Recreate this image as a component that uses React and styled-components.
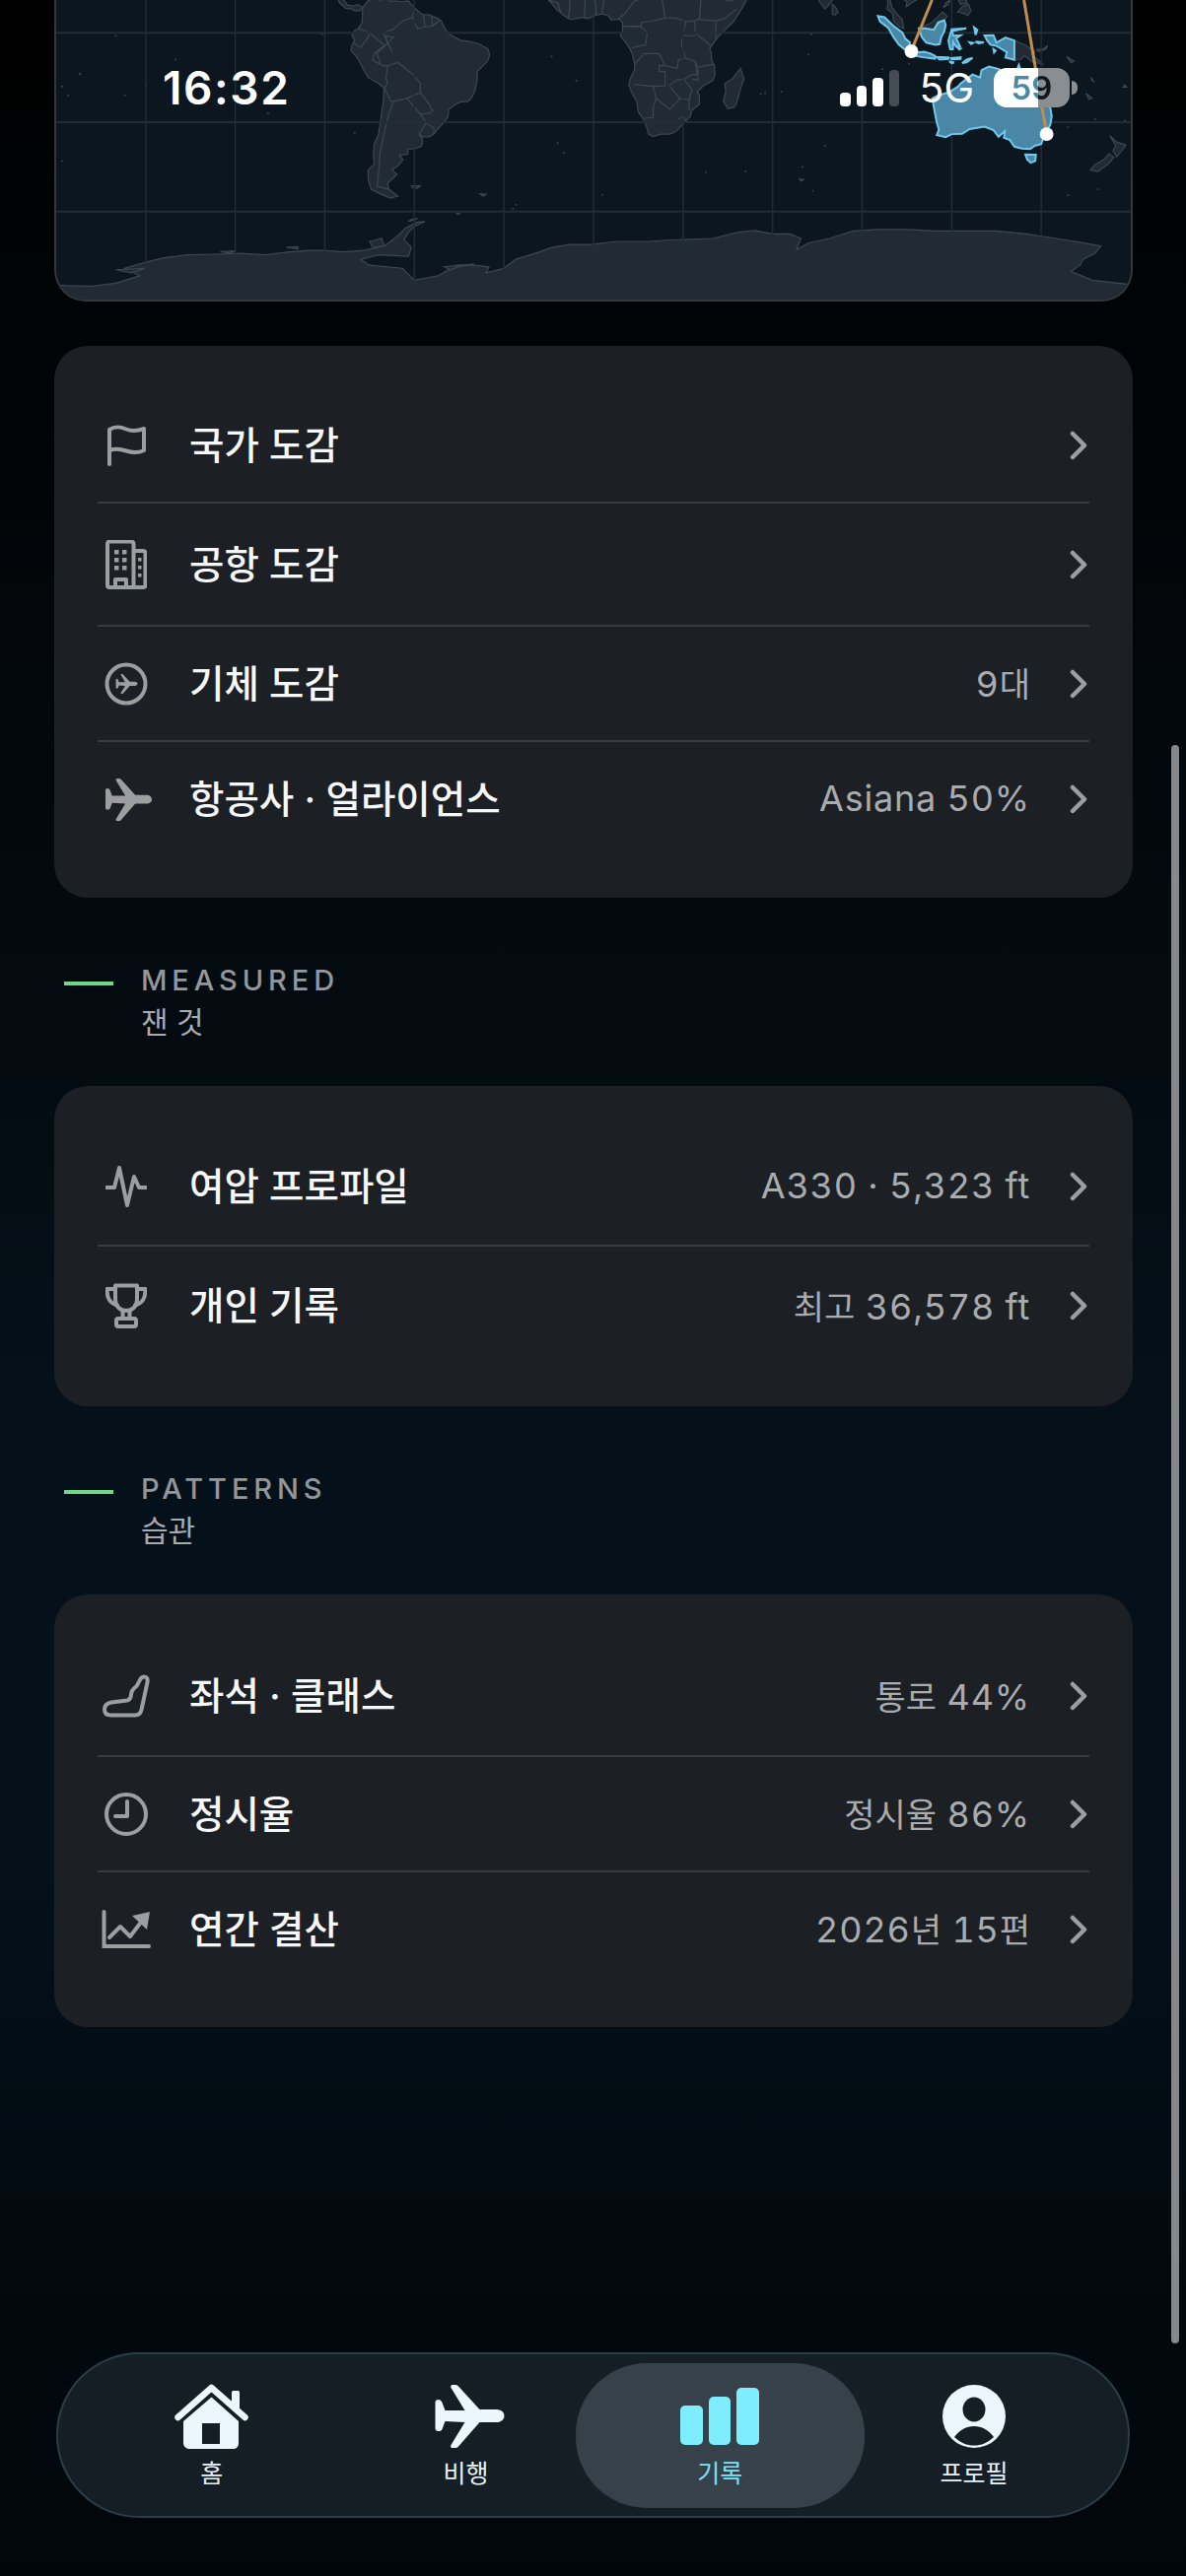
import React from 'react';
import styled, { createGlobalStyle } from 'styled-components';

const Global = createGlobalStyle`
  html, body { margin: 0; padding: 0; background: #000; }
  body { font-family: Inter, "Noto Sans CJK KR", "Noto Sans", sans-serif; }
  * { box-sizing: border-box; }
`;

const Page = styled.div`
  position: relative;
  width: 1203px;
  height: 2614px;
  overflow: hidden;
  padding: 0 54px 0 55px;
  background: linear-gradient(180deg, #000 0, #010406 360px, #03090e 900px, #05111a 1500px, #04101a 1900px, #020a10 2250px, #01060a 2614px);
`;

const MapCard = styled.div`
  height: 306px;
  margin-bottom: 45px;
  background: #0c161e;
  border: 2px solid #32383d;
  border-top: 0;
  border-radius: 0 0 32px 32px;
  overflow: hidden;
`;
const MapSvg = styled.svg`
  display: block;
  width: 100%;
  height: 100%;
`;

const Status = styled.div`
  position: absolute;
  top: 0;
  left: 0;
  right: 0;
  height: 178px;
  padding: 0 118px 0 165px;
  display: flex;
  align-items: center;
  justify-content: space-between;
  color: #fff;
`;
const Time = styled.div`
  font-size: 46px;
  font-weight: 600;
  letter-spacing: 1.6px;
`;
const StatusRight = styled.div`
  display: flex;
  align-items: center;
  gap: 20px;
`;
const Signal = styled.div`
  display: flex;
  align-items: flex-end;
  gap: 6px;
  height: 37px;
`;
const SignalBar = styled.span`
  width: 10.5px;
  height: ${p => p.$h}px;
  border-radius: 4px;
  background: ${p => (p.$off ? '#454c53' : '#fff')};
`;
const Net = styled.div`
  font-size: 41px;
  font-weight: 400;
  line-height: 1;
`;
const Battery = styled.div`
  position: relative;
  width: 77px;
  height: 40px;
  border-radius: 13px;
  background: linear-gradient(90deg, #fff 58%, #8b8e91 58%);
  font-size: 33px;
  font-weight: 600;
  line-height: 40px;
  text-align: center;
  &::after {
    content: '';
    position: absolute;
    left: 79px;
    top: 13px;
    width: 6px;
    height: 14px;
    border-radius: 0 7px 7px 0;
    background: #8b8e91;
  }
`;
const BatteryText = styled.span`
  display: block;
  background: linear-gradient(90deg, #4d88a5 58%, #10181f 58%);
  -webkit-background-clip: text;
  background-clip: text;
  color: transparent;
`;

const Card = styled.section`
  background: #1c1f24;
  border-radius: 34px;
  padding: 43px 44px 42px;
`;
const Row = styled.div`
  height: ${p => p.$h}px;
  box-sizing: content-box;
  display: flex;
  align-items: center;
  padding-right: 2px;
  border-top: ${p => (p.$first ? '0' : '2px solid #3a3c41')};
`;
const IconSlot = styled.div`
  width: 58px;
  margin-right: 35px;
  display: flex;
  align-items: center;
  justify-content: center;
  color: #9c9ea0;
  flex: none;
`;
const Title = styled.div`
  flex: 1;
  color: #f6f7f8;
  font-size: 38.5px;
  font-weight: 500;
  padding-bottom: 6px;
`;
const Value = styled.div`
  color: #a9acaf;
  font-size: 36px;
  font-weight: 400;
  font-feature-settings: 'tnum';
  letter-spacing: 0.8px;
  margin-right: 40px;
  padding-bottom: 2px;
`;
const Hangul = styled.span`
  font-size: 34px;
  letter-spacing: 0;
`;
const Chevron = styled.svg`
  width: 18px;
  height: 30px;
  flex: none;
`;

const Head = styled.header`
  display: flex;
  margin: 66px 0 45px;
  padding-left: 10px;
  height: 80px;
`;
const HeadLine = styled.span`
  width: 50px;
  height: 4px;
  margin: 19px 28px 0 0;
  background: #6fd68a;
  flex: none;
`;
const HeadTitle = styled.div`
  color: #92979c;
  font-size: 29px;
  font-weight: 500;
  line-height: 36px;
  letter-spacing: 4.9px;
`;
const HeadSub = styled.div`
  color: #a8abae;
  font-size: 30px;
  line-height: 40px;
  margin-top: 4px;
`;

const Scrollbar = styled.div`
  position: absolute;
  left: 1188px;
  top: 756px;
  width: 8px;
  height: 1622px;
  border-radius: 4px;
  background: #85888a;
`;

const TabBar = styled.nav`
  position: absolute;
  left: 57px;
  top: 2387px;
  width: 1089px;
  height: 168px;
  padding: 0 27px;
  display: grid;
  grid-template-columns: repeat(4, 1fr);
  background: #141e24;
  border: 2px solid #2b3d47;
  border-radius: 84px;
`;
const Tab = styled.div`
  position: relative;
  display: flex;
  flex-direction: column;
  align-items: center;
  padding-top: 30px;
  color: ${p => (p.$active ? '#7be3f7' : '#e6f2fa')};
  font-size: 25px;
  line-height: 32px;
  ${p => p.$active && `
    &::before {
      content: '';
      position: absolute;
      left: -18px;
      right: -18px;
      top: 9px;
      bottom: 8px;
      border-radius: 72px;
      background: #364149;
    }
  `}
`;
const TabIcon = styled.div`
  position: relative;
  height: 66px;
  margin-bottom: 9px;
  display: flex;
  align-items: center;
  justify-content: center;
`;
const TabLabel = styled.span`
  position: relative;
`;
const PlaneGlyph = styled.svg`
  margin-left: ${p => p.$shift}px;
`;

const P = { fill: 'none', stroke: 'currentColor', strokeWidth: 4, strokeLinecap: 'round', strokeLinejoin: 'round' };

const PLANE = 'M3 15C5 15 6 16 7 18L10 26L30 26L16 3C15 1 16 0 18 0L21 0C22 0 23 1 24 2L45 25L62 25C67 25 70 28 70 31.5C70 35 67 38 62 38L45 38L24 62C23 63 22 64 21 64L18 64C16 64 15 63 16 61L30 38L10 37L7 45C6 47 5 47 3 47C1 47 0 46 0 44L0 18C0 16 1 15 3 15Z';

const FlagIcon = () => (
  <svg width="42" height="42" viewBox="0 0 42 42"><path {...P} d="M4 40V5C10 1 15 2 21 4.500C27 7 32 6.500 39 4V26C33 29 27 28.500 21 26.500C15 24.500 10 24 4 26"/></svg>
);
const BuildingIcon = () => (
  <svg width="42" height="50" viewBox="0 0 42 50">
    <path {...P} d="M2 46V4C2 2.500 3 1.500 4.500 1.500H26C27.500 1.500 28.500 2.500 28.500 4V48H4C2.500 48 2 47 2 46ZM28.500 11H38C39.500 11 40.500 12 40.500 13.500V46C40.500 47.500 39.500 48 38 48H28.500"/>
    <path {...P} d="M10 48V40H21V48"/>
    <g fill="currentColor">
      <rect x="9" y="10" width="4.500" height="4.500"/><rect x="17" y="10" width="4.500" height="4.500"/>
      <rect x="9" y="18" width="4.500" height="4.500"/><rect x="17" y="18" width="4.500" height="4.500"/>
      <rect x="9" y="26" width="4.500" height="4.500"/><rect x="17" y="26" width="4.500" height="4.500"/>
      <rect x="33" y="18" width="3.500" height="3.500"/><rect x="33" y="26" width="3.500" height="3.500"/><rect x="33" y="34" width="3.500" height="3.500"/>
    </g>
  </svg>
);
const PlaneCircleIcon = () => (
  <svg width="44" height="44" viewBox="0 0 44 44">
    <circle cx="22" cy="22" r="19.500" fill="none" stroke="currentColor" strokeWidth="4"/>
    <svg x="9" y="12" width="27" height="20" viewBox="0 0 70 64"><path fill="currentColor" d={PLANE}/></svg>
  </svg>
);
const PlaneIcon = ({ w, h, color, shift }) => (
  <PlaneGlyph $shift={shift} width={w} height={h} viewBox="0 0 70 64"><path fill={color} d={PLANE}/></PlaneGlyph>
);
const PulseIcon = () => (
  <svg width="42" height="42" viewBox="0 0 42 42"><path {...P} d="M1 22H9L14 2L22 40L29 11L34 22H41"/></svg>
);
const TrophyIcon = () => (
  <svg width="42" height="46" viewBox="0 0 42 46">
    <path {...P} d="M10 2.500H32V16C32 24 27 28 21 28C15 28 10 24 10 16Z"/>
    <path {...P} d="M10 6H1.500C1.500 15 4 20 12 22.500M32 6H40.500C40.500 15 38 20 30 22.500M17.500 28V36M24.500 28V36"/>
    <rect x="11" y="36" width="20" height="8" rx="2" {...P}/>
  </svg>
);
const SeatIcon = () => (
  <svg width="48" height="44" viewBox="0 0 48 44"><path {...P} d="M39 4C42 1 46.500 2.500 45.500 8L39.500 36C38.500 40 36.500 41.500 33 41.500H8.500C4 41.500 2 39 2 35.500C2 31.500 4 29.500 9 28.500L25 26.500C27 26 28 25 28.500 23L29.500 18C30 15.500 32 14 34 12.500C36.500 10 37 6.500 39 4Z"/></svg>
);
const ClockIcon = () => (
  <svg width="44" height="44" viewBox="0 0 44 44">
    <circle cx="22" cy="22" r="20" fill="none" stroke="currentColor" strokeWidth="4"/>
    <path {...P} d="M23 9V24H11"/>
  </svg>
);
const ChartIcon = () => (
  <svg width="50" height="40" viewBox="0 0 50 40">
    <path fill="none" stroke="currentColor" strokeWidth="4" strokeLinecap="round" d="M2.500 2V37H48"/>
    <path {...P} d="M8 28L19 17L29 27L42 10"/>
    <path fill="currentColor" d="M31 6L49 2L46 20Z"/>
  </svg>
);
const Arrow = () => (
  <Chevron viewBox="0 0 18 30"><path fill="none" stroke="#9c9ea0" strokeWidth="4.500" strokeLinecap="round" strokeLinejoin="round" d="M3 3L15 15L3 27"/></Chevron>
);

const HomeIcon = () => (
  <svg width="75" height="66" viewBox="0 0 75 66">
    <rect x="58" y="7" width="8" height="20" rx="1.500" fill="#ecf6fd"/>
    <path fill="none" stroke="#ecf6fd" strokeWidth="6.500" strokeLinecap="round" strokeLinejoin="round" d="M3.500 34L37.500 4L71.500 34"/>
    <path fill="#ecf6fd" fillRule="evenodd" d="M37.500 13.500L65 38V60C65 63.500 63 66 60 66H15C12 66 9 63.500 9 60V38ZM28 40V61H46V40Z"/>
  </svg>
);
const BarsIcon = () => (
  <svg width="80" height="58" viewBox="0 0 80 58" fill="#7eeeff">
    <rect x="0" y="18" width="23" height="40" rx="5"/>
    <rect x="29" y="9" width="22" height="49" rx="5"/>
    <rect x="57" y="0" width="23" height="58" rx="5"/>
  </svg>
);
const ProfileIcon = () => (
  <svg width="64" height="64" viewBox="0 0 64 64">
    <circle cx="32" cy="32" r="32" fill="#ecf6fd"/>
    <ellipse cx="32" cy="25" rx="11.500" ry="12.500" fill="#141e24"/>
    <path fill="#141e24" d="M12 53C18 45.500 24 42 32 42C40 42 46 45.500 52 53C46 59 39 61.500 32 61.500C25 61.500 18 59 12 53Z"/>
  </svg>
);

const pts = a => a.map(([x, y]) => `${x},${-y}`).join(' ');

const LAND = [
  [[-77.3,8.5],[-75.5,10.8],[-74.2,11.3],[-71.7,12.4],[-71.3,10.8],[-69.9,11.9],[-68.2,10.6],[-66,10.6],[-64,10.5],[-62,10.7],[-61,9.5],[-59.8,8.3],[-57.5,6.2],[-55,6],[-52.5,5],[-51,4],[-50,1.8],[-49,0.3],[-48,-0.7],[-44.5,-2.5],[-41.5,-2.9],[-38.5,-3.7],[-35.3,-5.4],[-34.8,-7.5],[-35.5,-9.5],[-37.2,-11.3],[-38.9,-13],[-39,-16],[-39.7,-19.5],[-41,-22],[-42,-23],[-44.5,-23.2],[-46.5,-24.2],[-48.5,-25.8],[-48.7,-28],[-50.3,-30.3],[-52.2,-32.3],[-53.5,-34],[-55,-34.9],[-57.5,-34.8],[-58.4,-34],[-57.2,-36],[-57.6,-38],[-60,-39],[-62.2,-39],[-62.2,-40.8],[-65,-41],[-63.8,-42.5],[-65.3,-44.5],[-67.5,-46],[-65.8,-47.5],[-69,-50.5],[-68.5,-52.5],[-65.5,-54.8],[-68,-55.5],[-71.5,-54],[-74.5,-52.5],[-75.5,-49],[-75.5,-46],[-73.5,-44],[-73.7,-41],[-73.5,-37.5],[-72,-34],[-71.4,-30],[-71,-27],[-70.4,-23],[-70.2,-18.5],[-72,-17],[-75.5,-15],[-77,-12.5],[-79,-8.5],[-81.2,-6],[-81,-4.3],[-80,-2.5],[-80.9,-1],[-80,0.8],[-78.8,1.5],[-77.5,3.5],[-77.4,6.5]],
  [[-83.6,12],[-83.6,11],[-82.5,9.3],[-80.5,9],[-79,9.5],[-77.4,8.6],[-78,7.5],[-80,7.3],[-81,8],[-83,8.2],[-85,10],[-86,12]],
  [[-17,13],[-15,11],[-13.7,9.5],[-12,7.5],[-9.5,5.5],[-7.5,4.4],[-4,5.2],[-2,4.8],[1,6],[3,6.3],[5,5.7],[6,4.3],[8.5,4.6],[9.7,3.5],[9.8,1],[9,-1],[11,-3.5],[12,-5],[13,-7],[13.8,-10.5],[13.7,-12.5],[12.5,-15],[11.8,-17.5],[13,-20.5],[14.5,-23],[15,-26.5],[16.5,-28.7],[18,-32],[18.4,-34],[20,-34.8],[22.5,-34],[25.7,-34],[28,-32.8],[30.5,-30],[32.5,-28],[32.9,-26],[35.4,-24],[35.5,-21],[34.8,-19.8],[36.5,-18],[40,-16],[40.7,-14],[40.5,-11],[39.5,-9],[39.5,-7],[38.9,-5.5],[39.8,-4],[41.5,-1.7],[44,1],[47,3.8],[49,7],[51,10.5],[51.2,12],[45,10.6],[43.3,11.5],[43,13]],
  [[49.3,-12],[50.4,-15.5],[49.5,-18],[47.8,-24],[47,-25],[45,-25.5],[43.5,-23],[44.3,-20],[44,-17],[46.5,-15.5],[48,-13.5]],
  [[72.8,13],[74.5,12.5],[76,10],[77.5,8],[79,9.5],[80,11],[80.2,13]],
  [[80,9.5],[81.2,8.5],[81.9,7],[81,6],[80,6.2]],
  [[98.3,12],[98.7,10],[98.3,8],[100.2,6.5],[100.5,4],[102.5,2],[104,1.5],[103.4,4.5],[101.5,6.5],[100,8.5],[99.4,11],[100,12],[102.5,12],[105,10.5],[104.8,8.8],[106.5,10],[109,11.5],[109,13],[98.3,13]],
  [[109.5,1.5],[111,1.5],[114,1],[115.5,3.5],[117.5,4.2],[118.5,5.5],[117,7],[115,5],[113,3.2],[111,2.5]],
  [[141,-2.6],[145,-4.3],[147.8,-6.2],[147.5,-7.8],[150.5,-10.5],[147,-9.8],[144.5,-7.7],[143,-9],[141,-9.1]],
  [[148.5,-5.6],[150.5,-5.5],[152.2,-4.3],[151.5,-5.5],[149,-6.3]],
  [[122,7],[123.5,8.7],[125.5,9.7],[126.5,7.5],[125.5,5.8],[124,6.5]],
  [[118,10],[119.5,11],[118.8,9.5],[117.2,8.4]],
  [[122,11.5],[125,11.2],[125,10],[123,9.5]],
  [[173,-34.5],[175,-36.5],[178.4,-37.7],[177,-39.5],[175.3,-41.6],[174,-39.5],[175,-38]],
  [[172.7,-40.6],[174.3,-41.7],[172.8,-43.7],[171,-45],[169,-46.6],[166.5,-46],[168,-44.3],[171,-42.5]],
  [[-61,-51.4],[-58,-51.3],[-59,-52.2],[-60.5,-52]],
  [[-38,-54],[-36,-54.2],[-37,-54.8]],
  [[158.5,-8],[161,-9.5],[160,-10]],[[165,-20.3],[167,-22],[166,-22.3]],
  [[166.8,-15],[167.5,-16.3],[167,-16]],
  [[178,-17.5],[178.6,-18.2],[177.4,-18.2]],
  [[69,-49],[70.5,-49.2],[69.5,-49.8]],
  [[-180,-90],[-180,-84.6],[-176.5,-84.8],[-168,-85],[-160,-84],[-152,-81.5],[-157,-79],[-150,-77],[-144,-75.5],[-136,-74.5],[-127,-74.3],[-118,-74],[-110,-74.5],[-102,-73.5],[-95,-73],[-90,-73],[-84,-73.5],[-77,-73],[-70,-71.5],[-66,-68.5],[-63,-65.5],[-59,-63.5],[-56.5,-63.3],[-60,-65],[-62,-67],[-63.5,-69.5],[-61,-72],[-62,-75],[-72,-74.5],[-78,-76],[-75,-78],[-64,-79],[-60,-83],[-52,-81.5],[-46,-78],[-40,-78],[-35,-78.5],[-36,-80.5],[-30,-79],[-26,-76],[-18,-73.5],[-14,-72],[-8,-71],[-1,-71],[8,-70],[18,-70],[26,-69.5],[33,-69.3],[40,-69],[48,-67],[54,-66.3],[60,-67.5],[66,-67.5],[69.5,-69],[68,-72.8],[72,-70.5],[79,-69],[87,-66.5],[95,-66],[105,-66],[115,-66.5],[125,-66.5],[135,-66.5],[145,-67.5],[155,-69],[163,-70.3],[170,-71.5],[168,-74],[164,-76],[163,-78],[160,-80],[167,-83],[176,-84],[180,-84.5],[180,-90]],
  [[-62,-63.3],[-60,-62.7],[-59,-62.3],[-61,-62.6]],
  [[-46,-60.6],[-44.5,-60.7],[-45.5,-60.9]],
  [[-103,-72],[-99,-71.8],[-99,-72.5]],[[-125,-73.4],[-120,-73.2],[-122,-73.9]],
  [[-75,-70],[-71,-69],[-70,-71.5],[-74,-72]],
  [[-40,-77.6],[-45,-78.4],[-48,-79.5],[-50,-78.5]],
  [[-150,-79],[-160,-79.5],[-155,-80.5]],
];

const SPECKS = [[-160,-1],[-172,-14],[-150,-17.6],[-157,-21],[-140,-9],[-135,-23],[-109,-27],[-91,-0.5],[-80,-33.6],[-14,-8],[-5.7,-16],[-12,-37],[-10,-40.3],[56,-20.5],[57.5,-20.2],[63,-19.7],[72,-7.3],[73,-0.5],[105.7,-10.4],[96.8,-12.2],[77.5,-38],[70,-45],[51,-46.4],[37.6,-46.8],[159,-31.6],[168,-29],[178,-29.5],[-176,-21],[-172,-13.7],[-178,-18],[159,-54.5],[169,-52.5],[-178,-43],[-26,-57.7],[-27,-59],[3,-54.4],[73.5,-53]];

const HIGHLIGHT = [
  [[113.5,-22],[114.2,-26],[115,-30],[115.7,-32.5],[115,-34.3],[118,-35],[120,-34],[123.5,-33.9],[126,-32.3],[131,-31.5],[134,-32.7],[135.7,-34.9],[137.8,-33],[137.5,-35.2],[139.5,-36],[141,-38.2],[143.5,-38.8],[146.3,-39],[147.8,-37.9],[150,-37.3],[150.8,-35],[151.5,-33],[153,-31],[153.5,-28],[153,-25],[151,-23.5],[149.5,-22],[147,-19.3],[146,-18],[145.3,-15],[143.5,-14],[142.5,-10.8],[141.7,-13],[141,-16.7],[139.5,-17.5],[136,-15.5],[136,-12.2],[132.5,-11.3],[130,-12.5],[129.5,-15],[127,-14],[125,-15.5],[123,-17],[122.2,-18],[119,-20],[115.5,-21]],
  [[144.7,-40.8],[148.2,-40.9],[148,-43],[146.5,-43.6],[145.3,-42.5]],
  [[95.3,5.6],[97.5,5.2],[100.3,2.5],[103.5,0],[104.5,-2],[106,-3.2],[105.8,-5.8],[104.5,-5.8],[102.3,-4],[100.5,-1.5],[98.7,1.7],[96,3.8]],
  [[105.2,-6.8],[106,-5.9],[108.5,-6.6],[110.8,-6.4],[112.7,-6.9],[114.5,-7.8],[114.4,-8.7],[111,-8.3],[108,-7.8]],
  [[109,1.5],[111,1.5],[114,1],[115.5,3.5],[117.5,4.2],[118,2.5],[117.5,0.5],[116.5,-1.5],[116,-3.8],[114.5,-4],[111.5,-3.3],[110,-1.5]],
  [[119.5,-5.5],[120.4,-5.5],[120.5,-3],[121.5,-4.7],[122.8,-4.5],[121.5,-1.9],[123,-0.9],[120.5,-1],[120.2,0.6],[124.9,1.5],[120,1.2],[119.5,-0.5],[118.9,-2.7]],
  [[115,-8.2],[117,-8.2],[119,-8.3],[118.9,-8.8],[116,-9]],
  [[119.8,-8.5],[123,-8.2],[123,-8.8],[120,-8.9]],
  [[119.2,-9.6],[120.8,-10],[120,-10.2]],
  [[123.5,-10.2],[125,-9],[127,-8.4],[125,-9.9]],
  [[131,-0.9],[134,-0.8],[135,-3.3],[138,-1.6],[141,-2.6],[141,-9.1],[138,-8.3],[138.5,-6.5],[135,-4.4],[133,-4],[132,-2.8]],
  [[127.5,1.8],[128.6,1],[128,-0.7],[127.8,0.5]],
  [[128,-3],[130.8,-3.2],[129,-3.5]],
  [[126,-3.2],[127.2,-3.4],[126.5,-3.8]],
  [[122,-5],[123,-5.3],[122.5,-5.6]],
  [[134,-5.5],[134.7,-6],[134.2,-6.6]],
];

const BORDERS = [
  '-71.3,-10.8 -72.5,-7 -67,-1.5 -69.5,-1 -69,-4 -70,-4.2 -73.5,-7 -74,-9.3 -70.5,-11 -69,-11 -69.5,-15 -69,-17 -70,-18.5',
  '-67.5,-6.3 -70.5,0 -67,1.2 -64,4 -60.7,5.2 -60,8',
  '-78.8,1.5 -75,0 -70,-4.2',
  '-80.3,-3.4 -78,-5 -75.5,-1.5 -75,0',
  '-70,-18.5 -68,-22.8 -67,-23 -68.5,-27 -70,-33 -71.5,-40 -72,-47 -72.5,-51.5 -68.5,-52.5',
  '-69,-11 -65.5,-10 -60.5,-14 -58,-17 -58,-20 -62.5,-22 -67,-23',
  '-62.5,-22 -58,-27.3 -55,-27 -53.7,-26 -54.5,-25.5 -55,-24 -58,-20',
  '-58,-27.3 -56,-30.2 -58.4,-34',
  '-56,-30.2 -53.5,-32 -53.5,-34',
  '-60.7,5.2 -59,1.3 -56.5,2 -54,2.3 -51.5,4.2',
  '-57,6 -56.5,2',
  '-54.2,5.5 -54,2.3',
  '-15,11 -12,10 -11,7',
  '-8.5,4.6 -8,8 -8,11',
  '-3,5 -2.8,10.8',
  '1,6 0.5,11',
  '2.8,6.4 3.5,11',
  '8.6,4.8 11,7 13.5,10.5 15,11',
  '9.8,2.2 16,2 16,3.5 19,3.8 24,5 27.5,5 31,3.7 34,4 35.8,5',
  '11.3,2.2 14,2.2 16,2 18,0 17.5,-4 13,-5',
  '31,3.7 30,0 29.5,-4 30.8,-8.5 28.5,-9 28,-12 24,-11 22,-11 22,-13 24,-13 24,-17.8 20,-18 13.5,-17.3',
  '13.8,-10.5 17,-7 22,-7 24,-11',
  '34,4 34,0 39.5,-4.5',
  '30,-1 34,-1',
  '30.8,-8.5 34,-9.5 35,-11.5 40.5,-10.5',
  '34,-9.5 34.7,-14 33,-14 30.5,-15.5 30,-15.6 28,-15.8 25.2,-17.8',
  '35,-11.5 35,-16 33,-15.5',
  '30.3,-15.6 33,-19 32,-22.4 31,-22.3 29,-22 25.5,-18',
  '32,-22.4 32,-26',
  '20,-18 21,-22 20,-24.7 20,-28.4 17,-28.7',
  '21,-22 25.5,-25.7 29,-22',
  '41,4 41,-1.7',
  '34.8,4.5 41,4 44,4.8 48,8',
  '35.5,5 36,11',
  '24,5 23,11',
  '28.5,-29 30,-28 31,-29.5 28.5,-30',
];

const LandShape = styled.polygon`
  fill: #222b33;
  stroke: #3c4750;
  stroke-width: 1.2px;
  vector-effect: non-scaling-stroke;
`;
const LitShape = styled.polygon`
  fill: #4a87a6;
  stroke: #6fc9ec;
  stroke-width: 2px;
  vector-effect: non-scaling-stroke;
`;
const Border = styled.polyline`
  fill: none;
  stroke: #3c4750;
  stroke-width: 1.2px;
  vector-effect: non-scaling-stroke;
`;
const Grid = styled.line`
  stroke: #222c34;
  stroke-width: ${p => (p.$strong ? 2 : 1.5)}px;
  vector-effect: non-scaling-stroke;
`;
const Route = styled.line`
  stroke: #c28d50;
  stroke-width: 3px;
  vector-effect: non-scaling-stroke;
`;

const WorldMap = () => (
  <MapSvg viewBox="-180 -11 360 100.5" preserveAspectRatio="none">
    {LAND.map((a, i) => <LandShape key={i} points={pts(a)} />)}
    {SPECKS.map(([x, y], i) => <ellipse key={i} cx={x} cy={-y} rx="0.35" ry="0.3" fill="#39444d" />)}
    {BORDERS.map((b, i) => (
      <Border key={i} points={b.split(' ').map(s => { const [x, y] = s.split(','); return `${x},${-y}`; }).join(' ')} />
    ))}
    {[-150,-120,-90,-60,-30,0,30,60,90,120,150].map(x => <Grid key={x} x1={x} x2={x} y1="-11" y2="90" />)}
    {[0,30,60].map(y => <Grid key={y} $strong x1="-180" x2="180" y1={y} y2={y} />)}
    {HIGHLIGHT.map((a, i) => <LitShape key={i} points={pts(a)} />)}
    <Route x1="113.4" y1="-11" x2="106.500" y2="6" />
    <Route x1="144.200" y1="-11" x2="151.800" y2="34" />
    <ellipse cx="106.500" cy="6.200" rx="2.300" ry="2.300" fill="#fff" />
    <ellipse cx="151.800" cy="34" rx="2.300" ry="2.300" fill="#fff" />
  </MapSvg>
);

const Item = ({ icon, title, value, h, first }) => (
  <Row $h={h} $first={first}>
    <IconSlot>{icon}</IconSlot>
    <Title>{title}</Title>
    {value && <Value>{value}</Value>}
    <Arrow />
  </Row>
);

const Section = ({ title, sub }) => (
  <Head>
    <HeadLine />
    <div>
      <HeadTitle>{title}</HeadTitle>
      <HeadSub>{sub}</HeadSub>
    </div>
  </Head>
);

export default function App() {
  return (
    <Page>
      <Global />
      <MapCard><WorldMap /></MapCard>
      <Card>
        <Item first h={115} icon={<FlagIcon />} title="국가 도감" />
        <Item h={123} icon={<BuildingIcon />} title="공항 도감" />
        <Item h={115} icon={<PlaneCircleIcon />} title="기체 도감" value={<>9<Hangul>대</Hangul></>} />
        <Item h={116} icon={<PlaneIcon w={47} h={43} color="#9c9ea0" shift={5} />} title="항공사 · 얼라이언스" value="Asiana 50%" />
      </Card>
      <Section title="MEASURED" sub="잰 것" />
      <Card>
        <Item first h={118} icon={<PulseIcon />} title="여압 프로파일" value="A330 · 5,323 ft" />
        <Item h={120} icon={<TrophyIcon />} title="개인 기록" value={<><Hangul>최고</Hangul> 36,578 ft</>} />
      </Card>
      <Section title="PATTERNS" sub="습관" />
      <Card>
        <Item first h={120} icon={<SeatIcon />} title="좌석 · 클래스" value={<><Hangul>통로</Hangul> 44%</>} />
        <Item h={115} icon={<ClockIcon />} title="정시율" value={<><Hangul>정시율</Hangul> 86%</>} />
        <Item h={115} icon={<ChartIcon />} title="연간 결산" value={<>2026<Hangul>년</Hangul> 15<Hangul>편</Hangul></>} />
      </Card>

      <Status>
        <Time>16:32</Time>
        <StatusRight>
          <Signal>
            <SignalBar $h={14} /><SignalBar $h={21} /><SignalBar $h={29} /><SignalBar $h={37} $off />
          </Signal>
          <Net>5G</Net>
          <Battery><BatteryText>59</BatteryText></Battery>
        </StatusRight>
      </Status>

      <Scrollbar />

      <TabBar>
        <Tab><TabIcon><HomeIcon /></TabIcon><TabLabel>홈</TabLabel></Tab>
        <Tab><TabIcon><PlaneIcon w={71} h={64} color="#ecf6fd" shift={8} /></TabIcon><TabLabel>비행</TabLabel></Tab>
        <Tab $active><TabIcon><BarsIcon /></TabIcon><TabLabel>기록</TabLabel></Tab>
        <Tab><TabIcon><ProfileIcon /></TabIcon><TabLabel>프로필</TabLabel></Tab>
      </TabBar>
    </Page>
  );
}
